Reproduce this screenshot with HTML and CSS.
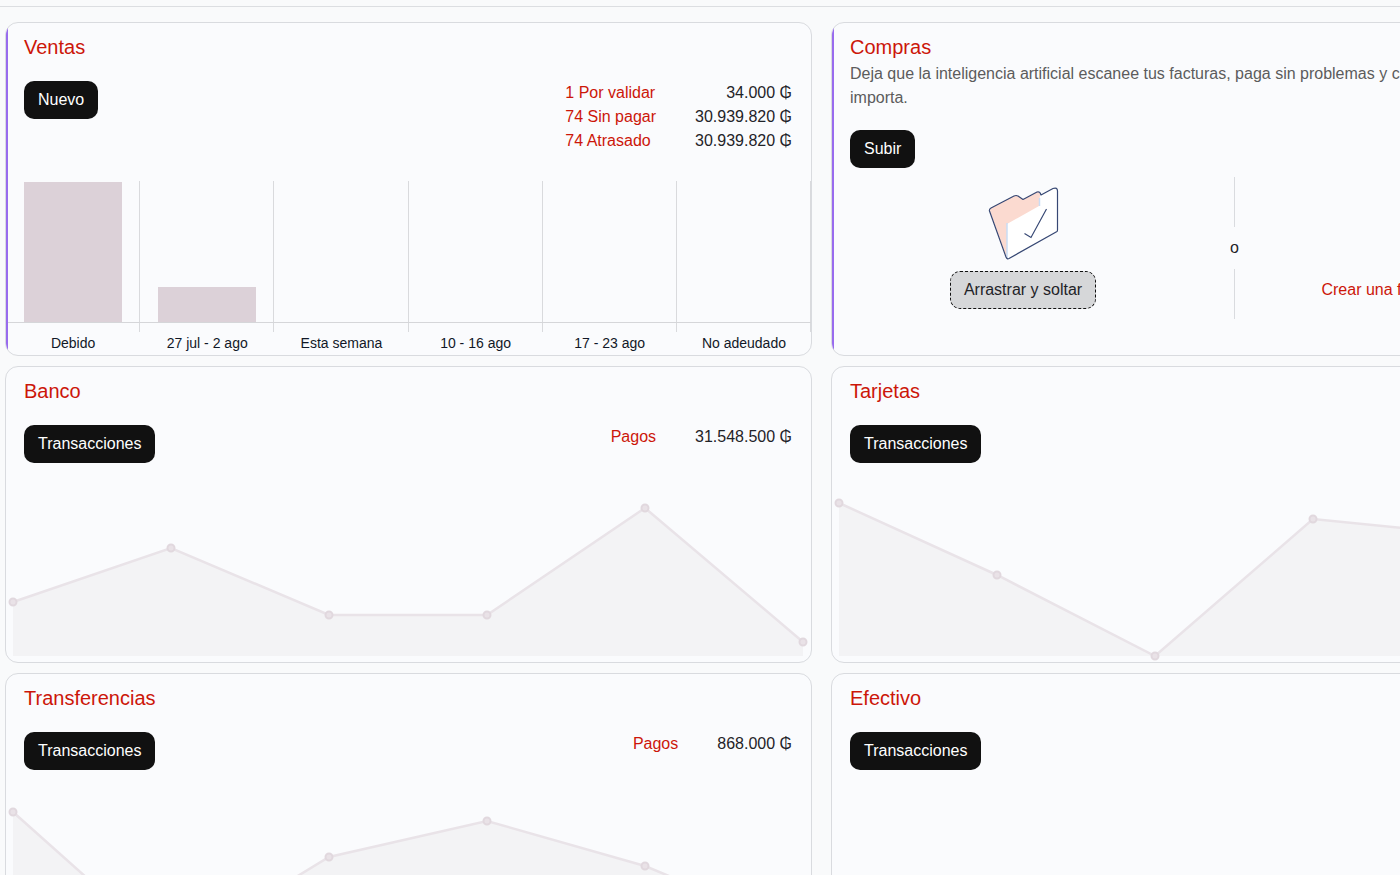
FILE: index.html
```html
<!DOCTYPE html>
<html lang="es">
<head>
  <meta charset="UTF-8">
  <meta name="viewport" content="width=device-width, initial-scale=1.0">
  <title>Tablero contable</title>
  <link rel="stylesheet" href="styles.css">
</head>
<body>
  <header class="control-panel"></header>

  <main class="board">
    <section class="card accent">
      <h2><a href="#ventas">Ventas</a></h2>
      <div class="summary">
        <button class="btn">Nuevo</button>
        <table class="stats">
          <tr><td><a href="#validar">1 Por validar</a></td><td class="amount">34.000 ₲</td></tr>
          <tr><td><a href="#sin-pagar">74 Sin pagar</a></td><td class="amount">30.939.820 ₲</td></tr>
          <tr><td><a href="#atrasado">74 Atrasado</a></td><td class="amount">30.939.820 ₲</td></tr>
        </table>
      </div>
      <div class="bars">
        <div class="bar-col"><div class="plot"><div class="bar" style="height: 99%"></div></div></div>
        <div class="bar-col"><div class="plot"><div class="bar" style="height: 25%"></div></div></div>
        <div class="bar-col"><div class="plot"></div></div>
        <div class="bar-col"><div class="plot"></div></div>
        <div class="bar-col"><div class="plot"></div></div>
        <div class="bar-col"><div class="plot"></div></div>
      </div>
      <div class="bar-labels">
        <span>Debido</span>
        <span>27 jul - 2 ago</span>
        <span>Esta semana</span>
        <span>10 - 16 ago</span>
        <span>17 - 23 ago</span>
        <span>No adeudado</span>
      </div>
    </section>

    <section class="card accent">
      <h2><a href="#compras">Compras</a></h2>
      <p class="desc">Deja que la inteligencia artificial escanee tus facturas, paga sin problemas y concéntrate en lo que más importa.</p>
      <div class="summary">
        <button class="btn">Subir</button>
      </div>
      <div class="upload">
        <div class="upload-side">
          <svg class="folder" viewBox="0 0 72 76" aria-hidden="true">
            <path d="M3 24Q2 22 4 21L27 9Q29 8 31 9L36 12.500L50 5Q53 3.500 54 8L67 1.500Q71 0 71 4V44L22 72Q20 73 19 71Z" fill="#fff"/>
            <path d="M3 24Q2 22 4 21L27 9Q29 8 31 9L36 12.500L50 5Q53 4 53 8L52 19L20 37V72Z" fill="#fbdad0"/>
            <path d="M20 36V71M52.500 11V19" fill="none" stroke="#c9dcf5" stroke-width="1.500"/>
            <path d="M2.500 24Q2 22 4 21L27 9Q29 8 31 9L36 12.500L50 5Q53 4 54 8L66 1.500Q70.500 0 70.500 4V43Q70.500 44 70 44.500L22 71.500Q20 72.500 19 70Z" fill="none" stroke="#374874" stroke-width="1.200" stroke-linejoin="round"/>
            <path d="M37.500 46.500L44 50.500L59.500 22" fill="none" stroke="#374874" stroke-width="1.200"/>
          </svg>
          <button class="btn drop">Arrastrar y soltar</button>
        </div>
        <div class="or"><span>o</span></div>
        <div class="upload-side">
          <a class="create" href="#crear">Crear una factura de forma manual</a>
        </div>
      </div>
    </section>

    <section class="card">
      <h2><a href="#banco">Banco</a></h2>
      <div class="summary">
        <button class="btn">Transacciones</button>
        <table class="stats">
          <tr><td><a href="#pagos-banco">Pagos</a></td><td class="amount">31.548.500 ₲</td></tr>
        </table>
      </div>
      <svg class="line-chart" viewBox="0 0 805 179" aria-hidden="true">
        <path class="area" d="M7 173V119L165 65L323 132H481L639 25L797 159V173Z"/>
        <path class="line" d="M7 119L165 65L323 132H481L639 25L797 159"/>
        <circle cx="7" cy="119" r="3.500"/><circle cx="165" cy="65" r="3.500"/><circle cx="323" cy="132" r="3.500"/>
        <circle cx="481" cy="132" r="3.500"/><circle cx="639" cy="25" r="3.500"/><circle cx="797" cy="159" r="3.500"/>
      </svg>
    </section>

    <section class="card">
      <h2><a href="#tarjetas">Tarjetas</a></h2>
      <div class="summary">
        <button class="btn">Transacciones</button>
      </div>
      <svg class="line-chart" viewBox="0 0 805 179" aria-hidden="true">
        <path class="area" d="M7 173V20L165 92L323 173L481 36L639 52L797 100V173Z"/>
        <path class="line" d="M7 20L165 92L323 173L481 36L639 52L797 100"/>
        <circle cx="7" cy="20" r="3.500"/><circle cx="165" cy="92" r="3.500"/><circle cx="323" cy="173" r="3.500"/>
        <circle cx="481" cy="36" r="3.500"/><circle cx="639" cy="52" r="3.500"/><circle cx="797" cy="100" r="3.500"/>
      </svg>
    </section>

    <section class="card">
      <h2><a href="#transferencias">Transferencias</a></h2>
      <div class="summary">
        <button class="btn">Transacciones</button>
        <table class="stats">
          <tr><td><a href="#pagos-transferencias">Pagos</a></td><td class="amount">868.000 ₲</td></tr>
        </table>
      </div>
      <svg class="line-chart" viewBox="0 0 805 179" aria-hidden="true">
        <path class="area" d="M7 173V22L165 163L323 67L481 31L639 76L797 142V173Z"/>
        <path class="line" d="M7 22L165 163L323 67L481 31L639 76L797 142"/>
        <circle cx="7" cy="22" r="3.500"/><circle cx="165" cy="163" r="3.500"/><circle cx="323" cy="67" r="3.500"/>
        <circle cx="481" cy="31" r="3.500"/><circle cx="639" cy="76" r="3.500"/><circle cx="797" cy="142" r="3.500"/>
      </svg>
    </section>

    <section class="card">
      <h2><a href="#efectivo">Efectivo</a></h2>
      <div class="summary">
        <button class="btn">Transacciones</button>
      </div>
    </section>
  </main>
</body>
</html>
```
FILE: styles.css
```css
* { box-sizing: border-box; }
body { margin: 0; height: 100vh; overflow: hidden; background: #f9fafb; color: #1f2328; font: 16px/24px "Liberation Sans", Arial, sans-serif; }
a { color: #cc1609; text-decoration: none; }
.control-panel { height: 7px; border-bottom: 1px solid #dcdee1; }

/* the board is wider than the window, the second column runs off the right edge */
.board { display: grid; grid-template-columns: 1fr 1fr; gap: 10px 19px; width: 117%; padding: 15px 0 15px 5px; }
.card { position: relative; display: flex; flex-direction: column; min-width: 0; padding-top: 11px; background: #fafbfd; border: 1px solid #d9dbdf; border-radius: 13px; overflow: hidden; }
.accent::before { content: ""; position: absolute; left: 0; top: 0; bottom: 0; width: 2px; background: #986bee; }
.card h2 { margin: 0; padding: 0 18px; font-size: 20px; line-height: 27px; font-weight: normal; }
.desc { margin: 1px 0 0; padding: 0 18px; color: #5c5c5c; }

.summary { display: flex; justify-content: space-between; align-items: flex-start; margin-top: 20px; padding: 0 19px 0 18px; }
.btn { padding: 7px 14px; border: 0; border-radius: 10px; background: #111; color: #fff; font: inherit; cursor: pointer; }
.stats { border-collapse: collapse; }
.stats td { padding: 0; }
.stats .amount { padding-left: 39px; text-align: right; }

.bars { display: grid; grid-template-columns: repeat(6, 1fr); margin-top: 28px; }
.bar-col { padding-bottom: 9px; border-right: 1px solid #d9dadd; }
.plot { display: flex; align-items: flex-end; height: 142px; padding: 0 18px; border-bottom: 1px solid #d5d6d9; margin-right: -1px; }
.bar { width: 100%; background: #dcd1d8; }
.bar-labels { display: grid; grid-template-columns: repeat(6, 1fr); padding-bottom: 1px; color: #111827; font-size: 14px; line-height: 22px; text-align: center; }

.upload { display: grid; grid-template-columns: 9fr 2fr 9fr; margin: 9px 18px 0; height: 142px; }
.upload-side { display: flex; flex-direction: column; justify-content: flex-end; align-items: center; padding-bottom: 10px; }
.folder { width: 72px; height: 76px; margin-bottom: 8px; }
.drop { padding: 6px 13px; border: 1px dashed #111; background: #d6d7d9; color: #1f2328; }
.create { padding: 7px 0; }
.or { display: flex; flex-direction: column; align-items: center; gap: 9px; }
.or::before, .or::after { content: ""; flex: 1; width: 1px; background: #d9dbdf; }

.line-chart { display: block; width: 100%; margin-top: 20px; }
.area { fill: #f3f3f5; }
.line { fill: none; stroke: #e9e3e8; stroke-width: 2.5; }
.line-chart circle { fill: #e9e2e7; stroke: #e1d8de; stroke-width: 2; }
```
